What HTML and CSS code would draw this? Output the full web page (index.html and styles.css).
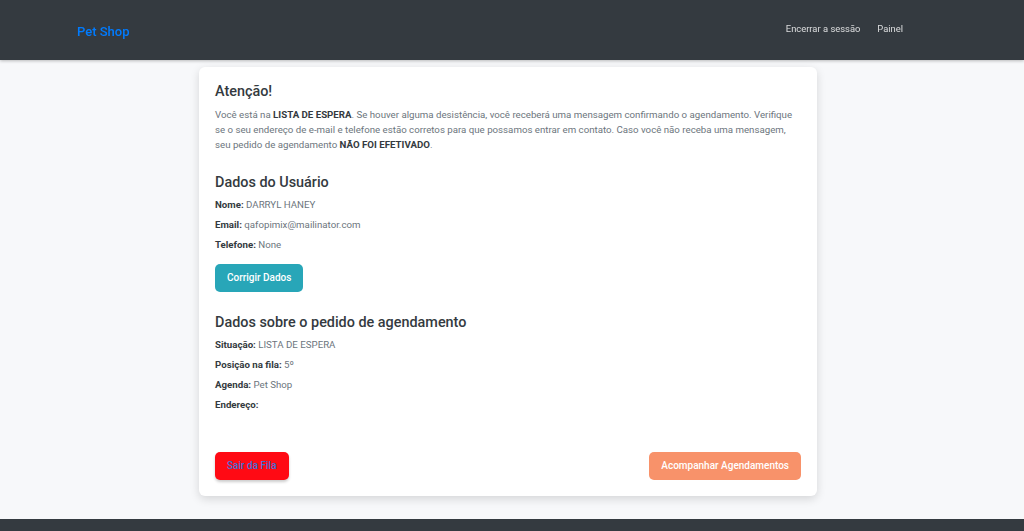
FILE: index.html
```html
<!DOCTYPE html>
<html lang="pt-BR">
<head>
    <meta charset="UTF-8">
    <meta name="viewport" content="width=device-width, initial-scale=1.0">
    <title>Pet Shop - Lista de Espera</title>
    <link rel="stylesheet" href="styles.css">
</head>
<body>
    <nav class="navbar">
        <a class="brand" href="#">Pet Shop</a>
        <div class="nav-links">
            <a href="#">Encerrar a sessão</a>
            <a href="#">Painel</a>
        </div>
    </nav>

    <main class="page">
        <div class="card">
            <h2>Atenção!</h2>
            <p class="notice">
                Você está na <b>LISTA DE ESPERA</b>. Se houver alguma desistência, você receberá uma mensagem confirmando o agendamento. Verifique se o seu endereço de e-mail e telefone estão corretos para que possamos entrar em contato. Caso você não receba uma mensagem, seu pedido de agendamento <b>NÃO FOI EFETIVADO</b>.
            </p>

            <h2 class="section">Dados do Usuário</h2>
            <ul class="info">
                <li><b>Nome:</b> DARRYL HANEY</li>
                <li><b>Email:</b> qafopimix@mailinator.com</li>
                <li><b>Telefone:</b> None</li>
            </ul>
            <a class="btn btn-info" href="#">Corrigir Dados</a>

            <h2 class="section">Dados sobre o pedido de agendamento</h2>
            <ul class="info">
                <li><b>Situação:</b> LISTA DE ESPERA</li>
                <li><b>Posição na fila:</b> 5º</li>
                <li><b>Agenda:</b> Pet Shop</li>
                <li><b>Endereço:</b></li>
            </ul>

            <div class="actions">
                <a class="btn btn-red" href="#">Sair da Fila</a>
                <a class="btn btn-orange" href="#">Acompanhar Agendamentos</a>
            </div>
        </div>
    </main>

    <footer class="footer"></footer>

    <script>
    // a página aparece já rolada um pouco
    window.scrollTo(0, 65);
    </script>
</body>
</html>
```

FILE: styles.css
```css
html, body {
    margin: 0;
    padding: 0;
}
body {
    font-family: Roboto, sans-serif;
    background: #f7f8fa;
    color: #6c757d;
    font-size: 9.7px;
}
a {
    text-decoration: none;
}

.navbar {
    position: fixed;
    top: 0;
    left: 0;
    right: 0;
    height: 60px;
    background: #343a40;
    display: flex;
    align-items: center;
    justify-content: space-between;
    padding: 0 121px 0 77px;
    box-shadow: 0 1px 3px rgba(0,0,0,.25);
    z-index: 10;
}
.brand {
    color: #007bff;
    font-weight: 500;
    font-size: 13px;
    margin-top: 3px;
}
.nav-links {
    display: flex;
    gap: 17px;
    margin-top: -4px;
}
.nav-links a {
    color: rgba(255,255,255,.82);
    font-size: 9.4px;
}
.page {
    padding: 132px 8px 23px 0;
    display: flex;
    justify-content: center;
}
.card {
    width: 586px;
    background: #fff;
    border-radius: 6px;
    padding: 14px 16px 16px;
    box-shadow: 0 3px 10px rgba(0,0,0,.14);
}
h2 {
    margin: 0;
    color: #343a40;
    font-size: 14.4px;
    font-weight: 500;
    line-height: 22px;
}
.notice {
    margin: 4px 0 0;
    line-height: 15px;
}
.notice b, .info b {
    color: #343a40;
    font-weight: 700;
}
.section {
    margin-top: 20px;
}
.info {
    list-style: none;
    margin: 1px 0 0;
    padding: 0;
}
.info li {
    line-height: 20px;
}
.btn {
    display: inline-block;
    padding: 0 12px;
    height: 28px;
    line-height: 28px;
    border-radius: 5px;
    font-weight: 500;
    font-size: 10px;
    color: #fff;
}
.btn-info {
    margin-top: 9px;
    background: #28a6b8;
}
.btn-red {
    background: #ff0a14;
    color: #3f6fd6;
    box-shadow: 0 2px 3px rgba(0,0,0,.2);
}
.btn-orange {
    background: #f8926a;
}
.actions {
    display: flex;
    justify-content: space-between;
    margin-top: 37px;
}
.footer {
    background: #343a40;
    height: 193px;
}
```
